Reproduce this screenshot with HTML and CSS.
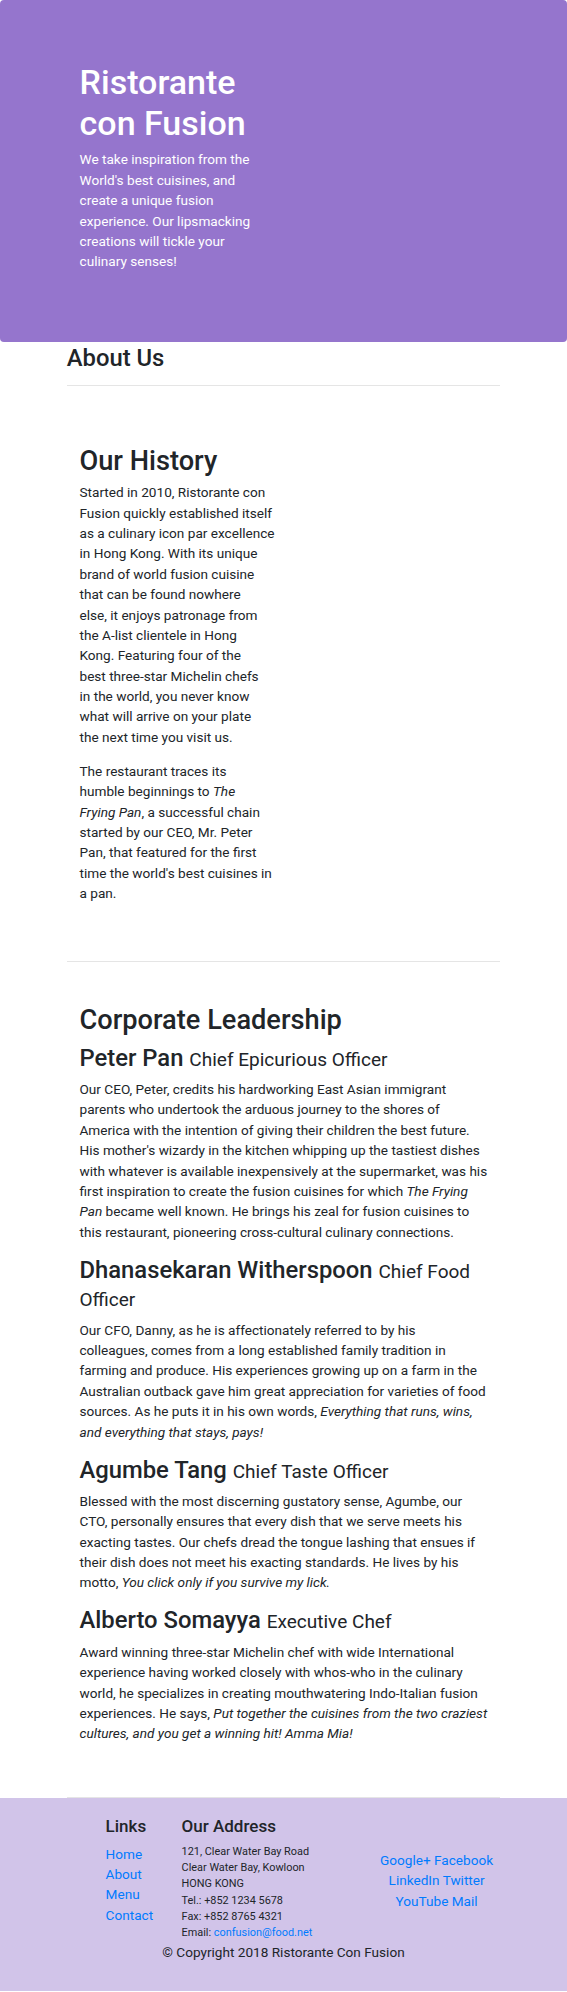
FILE: index.html
```html
<!DOCTYPE html>
<html lang="en">
<head>
<meta charset="utf-8">
<title>Ristorante con Fusion: About Us</title>
<link rel="stylesheet" href="styles.css">
</head>
<body>
<header class="jumbotron">
  <div class="jumbo-col">
    <h1 class="brand">Ristorante con Fusion</h1>
    <p class="tagline">We take inspiration from the World's best cuisines, and create a unique fusion experience. Our lipsmacking creations will tickle your culinary senses!</p>
  </div>
</header>

<main class="container">
  <div class="page-head">
    <h3 class="page-title">About Us</h3>
    <hr class="divider">
  </div>

  <section class="row-content history">
    <div class="half-col">
      <h2 class="section-title">Our History</h2>
      <p>Started in 2010, Ristorante con<br>Fusion quickly established itself<br>as a culinary icon par excellence<br>in Hong Kong. With its unique<br>brand of world fusion cuisine<br>that can be found nowhere<br>else, it enjoys patronage from<br>the A-list clientele in Hong<br>Kong. Featuring four of the<br>best three-star Michelin chefs<br>in the world, you never know<br>what will arrive on your plate<br>the next time you visit us.</p>
      <p>The restaurant traces its<br>humble beginnings to <em>The<br>Frying Pan</em>, a successful chain<br>started by our CEO, Mr. Peter<br>Pan, that featured for the first<br>time the world's best cuisines in<br>a pan.</p>
    </div>
  </section>

  <section class="row-content leadership">
    <h2 class="section-title">Corporate Leadership</h2>
    <div class="leader">
      <h3 class="leader-name">Peter Pan <small>Chief Epicurious Officer</small></h3>
      <p>Our CEO, Peter, credits his hardworking East Asian immigrant parents who undertook the arduous journey to the shores of America with the intention of giving their children the best future. His mother's wizardy in the kitchen whipping up the tastiest dishes with whatever is available inexpensively at the supermarket, was his first inspiration to create the fusion cuisines for which <em>The Frying Pan</em> became well known. He brings his zeal for fusion cuisines to this restaurant, pioneering cross-cultural culinary connections.</p>
    </div>
    <div class="leader">
      <h3 class="leader-name">Dhanasekaran Witherspoon <small>Chief Food Officer</small></h3>
      <p>Our CFO, Danny, as he is affectionately referred to by his<br>colleagues, comes from a long established family tradition in<br>farming and produce. His experiences growing up on a farm in the Australian outback gave him great appreciation for varieties of food sources. As he puts it in his own words, <em>Everything that runs, wins, and everything that stays, pays!</em></p>
    </div>
    <div class="leader">
      <h3 class="leader-name">Agumbe Tang <small>Chief Taste Officer</small></h3>
      <p>Blessed with the most discerning gustatory sense, Agumbe, our CTO, personally ensures that every dish that we serve meets his exacting tastes. Our chefs dread the tongue lashing that ensues if their dish does not meet his exacting standards. He lives by his motto, <em>You click only if you survive my lick.</em></p>
    </div>
    <div class="leader">
      <h3 class="leader-name">Alberto Somayya <small>Executive Chef</small></h3>
      <p>Award winning three-star Michelin chef with wide International experience having worked closely with whos-who in the culinary world, he specializes in creating mouthwatering Indo-Italian fusion experiences. He says, <em>Put together the cuisines from the two craziest cultures, and you get a winning hit! Amma Mia!</em></p>
    </div>
  </section>
</main>

<footer class="footer">
  <div class="footer-row">
    <div class="links-col">
      <h5 class="footer-title">Links</h5>
      <ul class="link-list">
        <li><a href="#">Home</a></li>
        <li><a href="#">About</a></li>
        <li><a href="#">Menu</a></li>
        <li><a href="#">Contact</a></li>
      </ul>
    </div>
    <div class="address-col">
      <h5 class="footer-title">Our Address</h5>
      <address class="address">
        121, Clear Water Bay Road<br>
        Clear Water Bay, Kowloon<br>
        HONG KONG<br>
        Tel.: +852 1234 5678<br>
        Fax: +852 8765 4321<br>
        Email: <a href="mailto:confusion@food.net">confusion@food.net</a>
      </address>
    </div>
    <div class="social-col">
      <a href="#">Google+</a> <a href="#">Facebook</a><br>
      <a href="#">LinkedIn</a> <a href="#">Twitter</a><br>
      <a href="#">YouTube</a> <a href="#">Mail</a>
    </div>
  </div>
  <p class="copyright">© Copyright 2018 Ristorante Con Fusion</p>
</footer>
</body>
</html>
```

FILE: styles.css
```css
* {
  box-sizing: border-box;
}

body {
  margin: 0;
  font-family: Roboto, "Liberation Sans", sans-serif;
  font-size: 13.6px;
  line-height: 1.5;
  color: #212529;
  background: #fff;
}

h1, h2, h3, h5 {
  font-weight: 500;
  line-height: 1.2;
  margin: 0;
}

p {
  margin: 0 0 13.6px;
}

a {
  color: #007bff;
  text-decoration: none;
}

/* Jumbotron */
.jumbotron {
  background: #9575cd;
  color: #fff;
  border-radius: 4px;
  padding: 62.3px 0 56.5px 79.6px;
}

.jumbo-col {
  width: 191.25px;
}

.brand {
  font-size: 34px;
  margin-bottom: 5.6px;
}

/* Main */
.container {
  width: 433.5px;
  margin: 0 auto;
}

.page-title {
  font-size: 23.8px;
  margin-top: 2px;
}

.divider {
  margin: 12.4px 0 0;
  border: 0;
  border-top: 1px solid rgba(0, 0, 0, 0.1);
  height: 0;
}

.row-content {
  padding-left: 12.75px;
  padding-right: 12.75px;
  border-bottom: 1px solid rgba(0, 0, 0, 0.1);
}

.history {
  padding-top: 58.9px;
  padding-bottom: 43.5px;
}

.half-col {
  width: 200px;
}

.section-title {
  font-size: 27.2px;
  margin-bottom: 6.8px;
}

.history .section-title {
  margin-bottom: 4.8px;
}

.leadership {
  padding-top: 42.5px;
  padding-bottom: 40px;
}

.leader-name {
  font-size: 23.8px;
  margin-bottom: 6.8px;
}

.leader-name small {
  font-size: 80%;
  font-weight: 400;
}

/* Footer */
.footer {
  background: #d1c4e9;
  padding: 17.5px 0 29px;
}

.footer-row {
  display: flex;
  padding-left: 105.6px;
}

.links-col {
  width: 76px;
}

.address-col {
  width: 175px;
}

.social-col {
  width: 160px;
  text-align: center;
  align-self: center;
  margin-top: 4px;
}

.footer-title {
  font-size: 17px;
  margin-bottom: 7.5px;
}

.link-list {
  list-style: none;
  margin: 0;
  padding: 0;
}

.address {
  font-style: normal;
  font-size: 10.88px;
  line-height: 1.5;
  margin: 0;
}

.copyright {
  text-align: center;
  margin: 0;
}
```
